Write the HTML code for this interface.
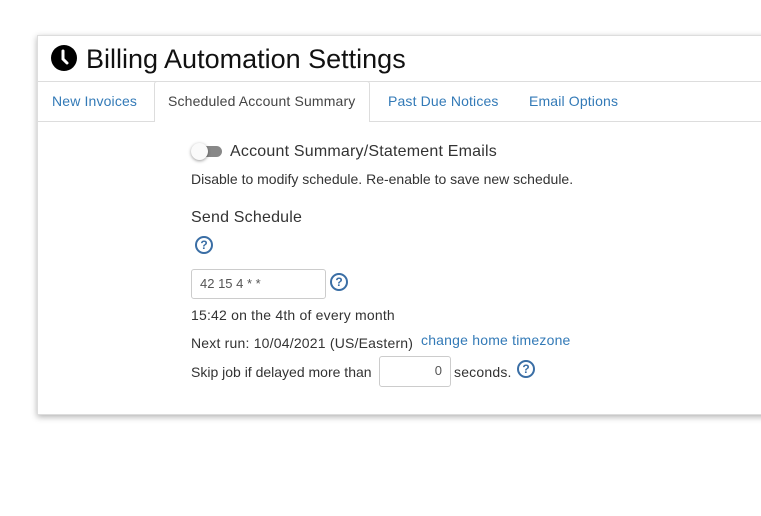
<!DOCTYPE html>
<html><head><style>
body{margin:0;width:761px;height:516px;background:#fff;font-family:"Liberation Sans",sans-serif;overflow:hidden;position:relative}
.panel{position:absolute;left:37px;top:35px;width:740px;height:378px;background:#fff;border:1px solid #ddd;box-shadow:0 2px 6px rgba(0,0,0,.3)}
.title{position:absolute;left:48px;top:44px;font-size:27px;color:#111;white-space:nowrap}
.hline{position:absolute;left:38px;right:0;height:1px;background:#ddd}
.tab{position:absolute;top:93px;font-size:14px;color:#337ab7;white-space:nowrap;letter-spacing:.15px}
.act{position:absolute;left:154px;top:81px;width:216px;height:41px;background:#fff;border:1px solid #ddd;border-bottom:none;box-sizing:border-box;border-radius:3px 3px 0 0}
.t{position:absolute;font-size:14px;color:#333;white-space:nowrap;letter-spacing:.2px}
.q{position:absolute;width:14px;height:14px;border:2px solid #3a6ea5;border-radius:50%;color:#3a6ea5;font-size:12px;font-weight:bold;text-align:center;line-height:14px}
.inp{position:absolute;border:1px solid #ccc;border-radius:3px;box-sizing:border-box;font-size:13px;color:#555;background:#fff}
</style></head><body>
<div class="panel"></div>
<svg style="position:absolute;left:51px;top:45px" width="26" height="26" viewBox="0 0 26 26"><circle cx="13" cy="13" r="13" fill="#000"/><path d="M12 6v8l4 4" stroke="#fff" stroke-width="3" fill="none" stroke-linecap="round"/></svg>
<div class="title" style="left:86px">Billing Automation Settings</div>
<div class="hline" style="top:81px"></div>
<div class="hline" style="top:121px"></div>
<div class="act"></div>
<div class="tab" style="left:52px">New Invoices</div>
<div class="tab" style="left:168px;color:#444">Scheduled Account Summary</div>
<div class="tab" style="left:388px">Past Due Notices</div>
<div class="tab" style="left:529px">Email Options</div>
<div style="position:absolute;left:196px;top:146px;width:26px;height:11px;border-radius:6px;background:#888"></div>
<div style="position:absolute;left:191px;top:143px;width:17px;height:17px;border-radius:50%;background:#fafafa;box-shadow:0 1px 3px rgba(0,0,0,.4)"></div>
<div class="t" style="left:230px;top:143px;font-size:16px">Account Summary/Statement Emails</div>
<div class="t" style="left:191px;top:171px;letter-spacing:0">Disable to modify schedule. Re-enable to save new schedule.</div>
<div class="t" style="left:191px;top:209px;font-size:16px">Send Schedule</div>
<div class="q" style="left:195px;top:236px">?</div>
<div class="inp" style="left:191px;top:269px;width:135px;height:30px;padding:6px 8px">42 15 4 * *</div>
<div class="q" style="left:330px;top:273px">?</div>
<div class="t" style="left:191px;top:307px">15:42 on the 4th of every month</div>
<div class="t" style="left:191px;top:335px">Next run: 10/04/2021 (US/Eastern)</div>
<div class="t" style="left:421px;top:332px;color:#337ab7">change home timezone</div>
<div class="t" style="left:191px;top:364px;letter-spacing:0">Skip job if delayed more than</div>
<div class="inp" style="left:379px;top:356px;width:72px;height:31px;padding:6px 8px;text-align:right">0</div>
<div class="t" style="left:454px;top:364px">seconds.</div>
<div class="q" style="left:517px;top:360px">?</div>
</body></html>
